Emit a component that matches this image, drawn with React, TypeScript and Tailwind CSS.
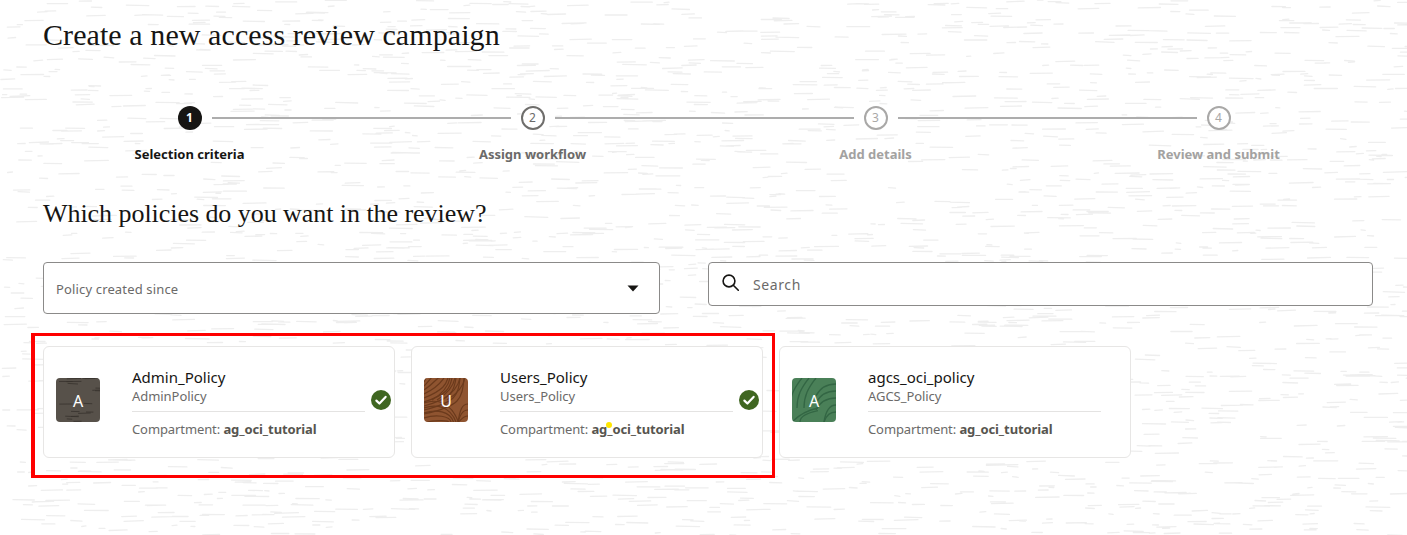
import React from "react";

const sans = "font-['Noto_Sans',sans-serif]";
const serif = "font-['Liberation_Serif',serif]";

function mulberry(seed: number) {
  return () => {
    seed |= 0; seed = (seed + 0x6d2b79f5) | 0;
    let t = Math.imul(seed ^ (seed >>> 15), 1 | seed);
    t = (t + Math.imul(t ^ (t >>> 7), 61 | t)) ^ t;
    return ((t ^ (t >>> 14)) >>> 0) / 4294967296;
  };
}

function Dashes({ w, h, count, color, seed, sw = 1.2 }: { w: number; h: number; count: number; color: string; seed: number; sw?: number }) {
  const r = mulberry(seed);
  const items = Array.from({ length: count }, () => {
    const x = r() * w, y = r() * h, l = 4 + r() * (w > 100 ? 20 : 12), t = (r() - 0.5) * 1.2;
    return `M${x.toFixed(1)} ${y.toFixed(1)}l${l.toFixed(1)} ${t.toFixed(1)}`;
  });
  return <path d={items.join("")} stroke={color} strokeWidth={sw} fill="none" strokeLinecap="round" />;
}

function Backdrop() {
  return (
    <svg className="absolute inset-0 w-full h-full" width="1407" height="535" aria-hidden="true">
      <Dashes w={1407} h={535} count={2600} color="#eeeeee" seed={11} sw={1.3} />
    </svg>
  );
}

function Avatar({ kind, letter }: { kind: "bark" | "wood" | "leaf"; letter: string }) {
  const bg = kind === "bark" ? "bg-[#57514a]" : kind === "wood" ? "bg-[#8f5430]" : "bg-[#4a8058]";
  return (
    <div className={`relative w-11 h-11 mb-1 rounded-[4px] overflow-hidden shrink-0 flex items-center justify-center ${bg}`}>
      <svg className="absolute inset-0" width="44" height="44" viewBox="0 0 44 44" fill="none" aria-hidden="true">
        {kind === "bark" && <Dashes w={44} h={44} count={18} color="#37322d" seed={5} sw={0.8} />}
        {kind === "wood" && (
          <g stroke="#6b3a1c" strokeWidth="1.2">
            {[4, 8, 12, 16, 20, 24, 28, 32, 36].map((r) => <path key={r} d={`M0 ${r}C${r} ${r - 8} ${r + 2} ${r - 14} ${r + 4} 0`} />)}
            {[8, 13, 18, 23].map((r) => <path key={r} d={`M${r + 18} 0C${r + 16} 10 ${r + 10} 16 ${r} 22`} />)}
            {[3, 8, 13, 18, 23].map((r) => <path key={r} d={`M0 ${22 + r}C12 ${18 + r} 26 ${20 + r} ${36 - r / 2} 44`} />)}
            {[4, 10, 16].map((r) => <path key={r} d={`M44 ${22 + r}C38 ${22 + r} 36 ${28 + r} 34 44`} />)}
          </g>
        )}
        {kind === "leaf" && (
          <g stroke="#336644" strokeWidth="1.3">
            {[2, 9, 16].map((r) => <path key={r} d={`M${r - 4} 30C${r - 4} 18 ${r} 10 ${r + 8} 0`} />)}
            {[6, 13, 20].map((r) => <path key={r} d={`M44 ${r}C34 ${r} 28 ${r + 4} 24 ${r + 12}`} />)}
            {[27, 34].map((r) => <path key={r} d={`M44 ${r}C38 ${r} 34 ${r + 4} 32 44`} />)}
            {[0, 8].map((r) => <path key={r} d={`M${r} 44C8 ${36 + r / 3} 16 ${32 + r / 3} 26 ${30 + r / 3}`} />)}
          </g>
        )}
      </svg>
      <span className={`relative text-white text-[16px] mt-[2px] ${sans}`}>{letter}</span>
    </div>
  );
}

function Card({ kind, letter, name, sub, checked }: { kind: "bark" | "wood" | "leaf"; letter: string; name: string; sub: string; checked?: boolean }) {
  return (
    <div className="relative w-[352px] h-[112px] bg-white rounded-[6px] border border-[#e7e6e5] pl-3 pr-[29px] flex items-center">
      <Avatar kind={kind} letter={letter} />
      <div className="ml-8 flex-1 min-w-0">
        <div className={`text-[15px] leading-5 text-[#161513] ${sans}`}>{name}</div>
        <div className={`text-[13px] leading-[17px] mt-[1px] tracking-[-0.05px] text-[#6b6a69] ${sans}`}>{sub}</div>
        <div className="border-t border-[#e4e3e2] mt-[6px] pt-[9px]">
          <span className={`block text-[13px] leading-[17px] tracking-[-0.1px] text-[#6b6a69] ${sans}`}>Compartment: <b className="font-bold text-[#57554f]">ag_oci_tutorial</b></span>
        </div>
      </div>
      {checked && (
        <svg className="absolute left-[327px] top-[43px]" width="20" height="20" viewBox="0 0 20 20" aria-hidden="true">
          <circle cx="10" cy="10" r="10" fill="#3f6621" />
          <path d="M5.4 10.6l3 2.9 6.2-6.6" fill="none" stroke="#fff" strokeWidth="2.2" strokeLinecap="round" strokeLinejoin="round" />
        </svg>
      )}
    </div>
  );
}

function Step({ n, label, state, first, last }: { n: number; label: string; state: "current" | "next" | "later"; first?: boolean; last?: boolean }) {
  const ring =
    state === "current"
      ? "bg-[#161513] text-white font-bold"
      : state === "next"
      ? "border-2 border-[#6f6e6c] text-[#6b6a69] bg-white"
      : "border-2 border-[#a9a8a7] text-[#a9a8a7] bg-white";
  const text = state === "current" ? "text-[#161513]" : state === "next" ? "text-[#6b6a69]" : "text-[#a3a2a1]";
  return (
    <div className="flex-1 flex flex-col items-center">
      <div className="w-full flex items-center h-6">
        <div className="flex-1 pr-[10px]">{!first && <div className="h-[2px] bg-[#adadad]" />}</div>
        <div className={`w-6 h-6 rounded-full flex items-center justify-center text-[12px] leading-none shrink-0 ${ring} ${sans}`}>{n}</div>
        <div className="flex-1 pl-[10px]">{!last && <div className="h-[2px] bg-[#adadad]" />}</div>
      </div>
      <div className={`mt-[15px] text-[13px] leading-[18px] font-bold ${text} ${sans}`}>{label}</div>
    </div>
  );
}

export default function App() {
  return (
    <div className="relative w-[1407px] h-[535px] overflow-hidden bg-white">
      <Backdrop />
      <div className="relative pl-[43px] pr-[34px] pt-[17px]">
        <h1 className={`text-[30px] leading-9 tracking-[0.08px] text-[#161513] ${serif}`}>Create a new access review campaign</h1>
        <div className="flex ml-[-25px] mr-[-17px] mt-[53px]">
          <Step n={1} label="Selection criteria" state="current" first />
          <Step n={2} label="Assign workflow" state="next" />
          <Step n={3} label="Add details" state="later" />
          <Step n={4} label="Review and submit" state="later" last />
        </div>
        <h2 className={`mt-[35px] text-[26px] leading-8 tracking-[-0.05px] text-[#161513] ${serif}`}>Which policies do you want in the review?</h2>
        <div className="mt-[32px] flex items-start gap-12">
          <div className="w-[617px] h-[52px] bg-white border border-[#8b8a89] rounded-[4px] flex items-center justify-between pl-3 pr-5">
            <span className={`text-[13px] tracking-[0.15px] text-[#6b6a69] mt-[3px] ${sans}`}>Policy created since</span>
            <svg width="12" height="7" viewBox="0 0 12 7" aria-hidden="true"><path d="M0.5 0.5h11L6 6.5z" fill="#161513" /></svg>
          </div>
          <div className="flex-1 h-[44px] bg-white border border-[#8b8a89] rounded-[4px] flex items-center pl-[13px]">
            <svg className="mb-1" width="17" height="17" viewBox="0 0 17 17" fill="none" stroke="#161513" strokeWidth="1.6" aria-hidden="true">
              <circle cx="7" cy="7" r="5.9" />
              <path d="M11.3 11.3l5 5" strokeLinecap="round" />
            </svg>
            <span className={`ml-[14px] text-[14px] tracking-[0.6px] text-[#6b6a69] ${sans}`}>Search</span>
          </div>
        </div>
        <div className="mt-[32px] flex gap-4">
          <Card kind="bark" letter="A" name="Admin_Policy" sub="AdminPolicy" checked />
          <Card kind="wood" letter="U" name="Users_Policy" sub="Users_Policy" checked />
          <Card kind="leaf" letter="A" name="agcs_oci_policy" sub="AGCS_Policy" />
        </div>
      </div>
      <div className="absolute left-[31px] top-[333px] w-[744px] h-[145px] border-[3px] border-l-4 border-[#ff0000]" />
      <div className="absolute left-[606px] top-[422px] w-[6px] h-[6px] rounded-full bg-[#ffe600]" />
    </div>
  );
}
